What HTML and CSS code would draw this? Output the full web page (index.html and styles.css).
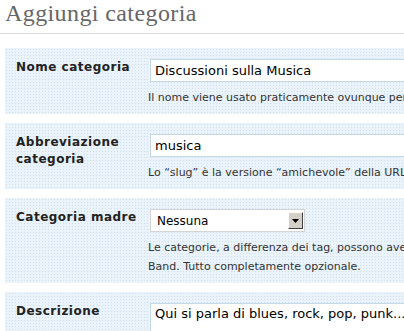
FILE: index.html
```html
<!DOCTYPE html>
<html lang="it">
<head>
    <meta charset="UTF-8">
    <title>Aggiungi categoria</title>
    <link rel="stylesheet" href="styles.css">
</head>
<body>

<h2 class="page-title">Aggiungi categoria</h2>

<form class="cat-form">
    <div class="form-row">
        <label class="row-label" for="cat_name">Nome categoria</label>
        <div class="row-field">
            <input type="text" id="cat_name" class="text-input" value="Discussioni sulla Musica">
            <p class="help">Il nome viene usato praticamente ovunque per identificare la categoria.</p>
        </div>
    </div>

    <div class="form-row">
        <label class="row-label" for="slug">Abbreviazione categoria</label>
        <div class="row-field">
            <input type="text" id="slug" class="text-input" value="musica">
            <p class="help">Lo “slug” è la versione “amichevole” della URL del nome.</p>
        </div>
    </div>

    <div class="form-row">
        <label class="row-label" for="parent">Categoria madre</label>
        <div class="row-field">
            <div class="fake-select" id="parent">
                <span>Nessuna</span>
                <span class="select-btn">
                    <svg width="7" height="4" viewBox="0 0 7 4"><path d="M0 0h7L3.5 4z" fill="#000"/></svg>
                </span>
            </div>
            <p class="help">Le categorie, a differenza dei tag, possono avere una gerarchia. Potresti avere una categoria Jazz, con le categorie figlie Bebop e Big<br>Band. Tutto completamente opzionale.</p>
        </div>
    </div>

    <div class="form-row">
        <label class="row-label" for="desc">Descrizione</label>
        <div class="row-field">
            <textarea id="desc" class="text-area">Qui si parla di blues, rock, pop, punk...</textarea>
        </div>
    </div>
</form>

</body>
</html>
```

FILE: styles.css
```css
body {
    margin: 0;
    padding: 0 0 0 5px;
    background-color: #ffffff;
    font-family: "DejaVu Sans", Verdana, sans-serif;
    color: #333333;
    overflow: hidden;
    width: 900px;
}

.page-title {
    font-family: "Liberation Serif", Georgia, serif;
    font-weight: normal;
    font-size: 24px;
    letter-spacing: 0.4px;
    color: #666666;
    margin: 0 0 0 -5px;
    padding: 0 0 0 5px;
    height: 33px;
    line-height: 26px;
    border-bottom: 1px solid #dddddd;
}

.cat-form {
    padding-top: 14px;
}

.form-row {
    display: flex;
    background-color: #eaf3fa;
    background-image: radial-gradient(circle, #cfdff0 0.7px, transparent 0.8px);
    background-size: 3px 3px;
    margin-bottom: 9px;
    padding: 11px 0 7px 11px;
}

.row-label {
    width: 134px;
    flex-shrink: 0;
    font-weight: bold;
    font-size: 12px;
    letter-spacing: 0.5px;
    color: #222222;
    line-height: 17px;
}

.row-field {
    flex-grow: 1;
}

.text-input,
.text-area {
    display: block;
    width: 440px;
    box-sizing: border-box;
    height: 23px;
    border: 1px solid #c6d9e9;
    background: #ffffff;
    font-family: "DejaVu Sans", Verdana, sans-serif;
    font-size: 13px;
    color: #000000;
    padding: 2px 4px;
    margin: 0;
}

.text-area {
    height: 60px;
    resize: none;
}

.fake-select {
    display: flex;
    justify-content: space-between;
    align-items: center;
    width: 155px;
    height: 23px;
    box-sizing: border-box;
    border: 1px solid #d4d4d4;
    background: #ffffff;
    font-size: 12px;
    color: #000000;
    padding: 0 1px 0 6px;
}

.select-btn {
    width: 15px;
    height: 17px;
    box-sizing: border-box;
    background: #d4d0c8;
    border: 1px solid;
    border-color: #ffffff #404040 #404040 #ffffff;
    display: flex;
    align-items: center;
    justify-content: center;
}

.help {
    margin: 6px 0 0 -2px;
    font-size: 11px;
    line-height: 19px;
    color: #333333;
    white-space: nowrap;
}
```
